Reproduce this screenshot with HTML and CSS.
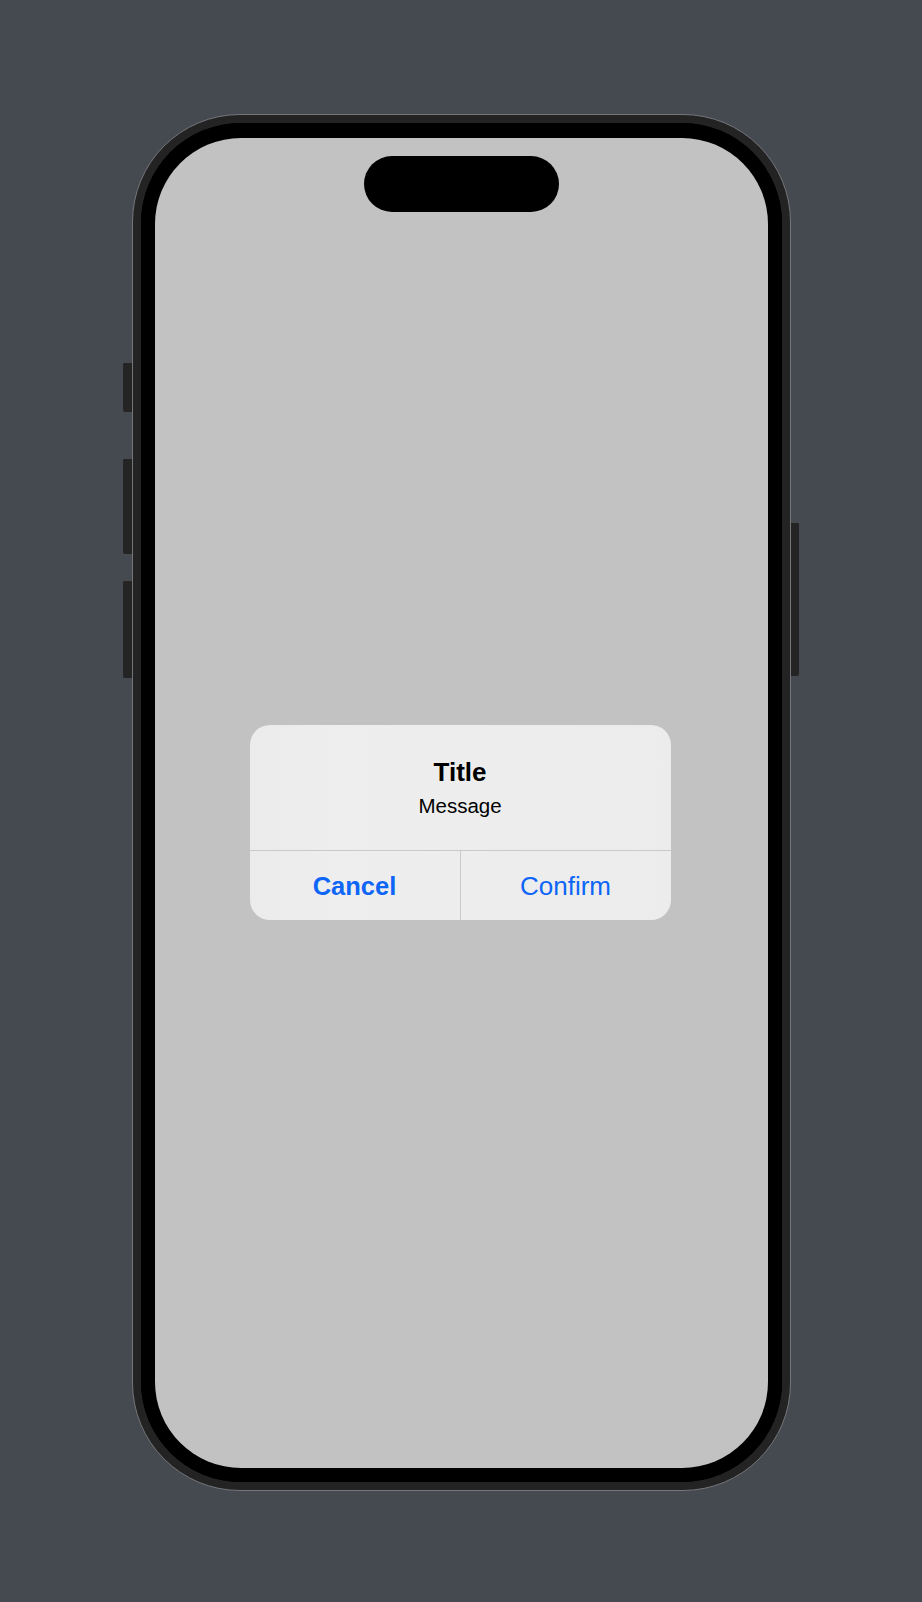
FILE: index.html
```html
<!DOCTYPE html>
<html lang="en">
<head>
<meta charset="utf-8">
<title>Alert</title>
<link rel="stylesheet" href="styles.css">
</head>
<body>
  <div class="stage">
    <div class="phone">
      <span class="btn btn-action"></span>
      <span class="btn btn-vol-up"></span>
      <span class="btn btn-vol-down"></span>
      <span class="btn btn-power"></span>
      <div class="band">
        <div class="bezel">
          <div class="screen">
            <div class="island"></div>
            <div class="alert">
              <div class="alert-body">
                <div class="alert-title">Title</div>
                <div class="alert-message">Message</div>
              </div>
              <div class="alert-actions">
                <div class="action action-cancel">Cancel</div>
                <div class="action action-confirm">Confirm</div>
              </div>
            </div>
          </div>
        </div>
      </div>
    </div>
  </div>
</body>
</html>
```

FILE: styles.css
```css
html, body {
  margin: 0;
  padding: 0;
  background: #454950;
  width: 922px;
  height: 1602px;
  overflow: hidden;
  font-family: "Liberation Sans", Arial, sans-serif;
}

.stage {
  display: flex;
  justify-content: center;
  padding-top: 114px;
}

.phone {
  position: relative;
  width: 659px;
  height: 1377px;
  box-sizing: border-box;
  border-radius: 108px;
  border: 1px solid #74767a;
  background: #232323;
  padding: 8px;
}

.band {
  width: 100%;
  height: 100%;
  box-sizing: border-box;
  border-radius: 100px;
  background: #000;
}

.bezel {
  width: 100%;
  height: 100%;
  box-sizing: border-box;
  padding: 15px 14px 14px 14px;
  border-radius: 100px;
  background: #000;
}

.screen {
  width: 100%;
  height: 100%;
  border-radius: 86px;
  background: #c2c2c2;
  display: flex;
  flex-direction: column;
  align-items: center;
  padding-top: 18px;
  box-sizing: border-box;
  overflow: hidden;
}

.island {
  width: 195px;
  height: 56px;
  border-radius: 28px;
  background: #000;
  flex: none;
}

.alert {
  margin-top: 513px;
  width: 421px;
  border-radius: 20px;
  background: linear-gradient(90deg, #ebebeb 0%, #eeeeee 20%, #ebeceb 100%);
  overflow: hidden;
  display: flex;
  flex-direction: column;
  transform: translateX(-1px);
}

.alert-body {
  padding: 31px 16px 31px;
  display: flex;
  flex-direction: column;
  align-items: center;
  gap: 5px;
  border-bottom: 1px solid #c9c9c9;
}

.alert-title {
  font-size: 26px;
  line-height: 32px;
  font-weight: 700;
  color: #000;
}

.alert-message {
  font-size: 20.5px;
  line-height: 26px;
  color: #000;
}

.alert-actions {
  display: flex;
  height: 69px;
}

.action {
  flex: 1;
  display: flex;
  align-items: center;
  justify-content: center;
  color: #0d66f7;
  font-size: 26px;
  padding-top: 2px;
}

.action-cancel {
  font-weight: 700;
  font-size: 25.5px;
  border-right: 1px solid #c9c9c9;
}

.btn {
  position: absolute;
  background: #242424;
  border-top: 1px solid #4a4a4a;
  box-sizing: border-box;
}

.btn-action {
  left: -10px;
  top: 247px;
  width: 9px;
  height: 50px;
  border-radius: 2px 0 0 2px;
}

.btn-vol-up {
  left: -10px;
  top: 343px;
  width: 9px;
  height: 96px;
  border-radius: 2px 0 0 2px;
}

.btn-vol-down {
  left: -10px;
  top: 465px;
  width: 9px;
  height: 98px;
  border-radius: 2px 0 0 2px;
}

.btn-power {
  right: -9px;
  top: 407px;
  width: 8px;
  height: 154px;
  border-radius: 0 2px 2px 0;
}
```
